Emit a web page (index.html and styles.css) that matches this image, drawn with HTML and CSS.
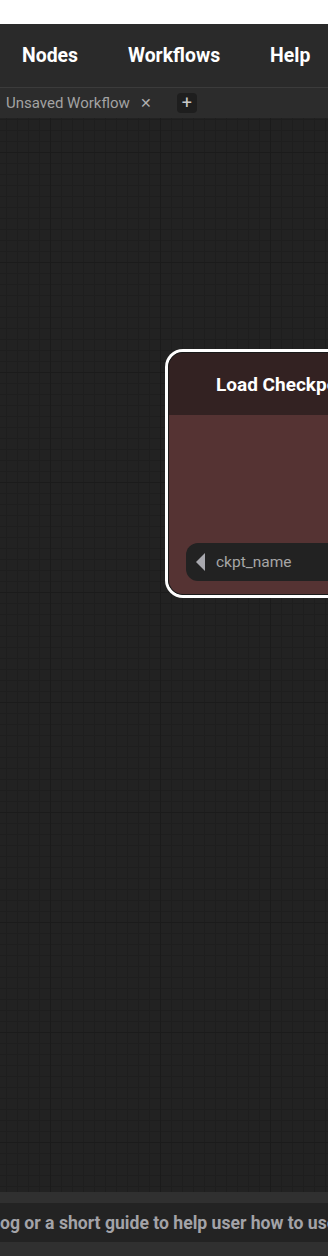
FILE: index.html
```html
<!DOCTYPE html>
<html lang="en">
<head>
    <meta charset="UTF-8">
    <meta name="viewport" content="width=device-width, initial-scale=1.0">
    <title>Workflow</title>
    <link rel="stylesheet" href="styles.css">
</head>
<body>
    <div class="app">
        <div class="topgap"></div>
        <nav class="menu">
            <span>Nodes</span>
            <span>Workflows</span>
            <span>Help</span>
        </nav>
        <div class="tabs">
            <span class="tab">Unsaved Workflow</span>
            <span class="tab-close">&#x2715;</span>
            <button type="button" class="tab-add">+</button>
        </div>
        <div class="canvas">
            <div class="node">
                <div class="node-title">Load Checkpoint</div>
                <div class="node-body">
                    <div class="widget">
                        <span class="arrow"></span>
                        <span class="widget-label">ckpt_name</span>
                    </div>
                </div>
            </div>
        </div>
        <div class="band"></div>
        <div class="guide">og or a short guide to help user how to use it</div>
        <div class="band"></div>
    </div>
</body>
</html>
```

FILE: styles.css
```css
*{
    box-sizing: border-box;
}

body{
    margin: 0;
    background-color: #fff;
    font-family: Roboto, "Noto Sans", sans-serif;
    overflow: hidden;
}

.app{
    width: 328px;
    height: 1256px;
    display: flex;
    flex-direction: column;
}

.topgap{
    height: 24px;
    background-color: #fff;
}

.menu{
    height: 64px;
    display: flex;
    align-items: center;
    gap: 50px;
    padding-left: 22px;
    background-color: #2a2a2a;
    border-bottom: 1px solid #3b3b3b;
    color: #fff;
    font-size: 19.4px;
    font-weight: bold;
    white-space: nowrap;
}

.tabs{
    height: 30px;
    display: flex;
    align-items: center;
    padding-left: 6px;
    background-color: #2c2c2c;
    color: #a3a3a3;
    font-size: 15px;
    white-space: nowrap;
}

.tab-close{
    margin-left: 10px;
    font-size: 14px;
    color: #b0b0b0;
}

.tab-add{
    margin-left: 25px;
    width: 20px;
    height: 20px;
    padding: 0;
    border: none;
    border-radius: 4px;
    background-color: #1e1e1e;
    color: #c8c8c8;
    font-family: Roboto, sans-serif;
    font-size: 18px;
    line-height: 20px;
}

.canvas{
    position: relative;
    flex: 1;
    overflow: hidden;
    background-color: #222;
    background-image:
        linear-gradient(to right, #1b1b1b 1px, transparent 1px),
        linear-gradient(to bottom, #1b1b1b 1px, transparent 1px),
        linear-gradient(to right, #1e1e1e 1px, transparent 1px),
        linear-gradient(to bottom, #1e1e1e 1px, transparent 1px);
    background-size: 110px 110px, 110px 110px, 11px 11px, 11px 11px;
    background-position: 50px 34px, 50px 34px, 6px 1px, 6px 1px;
}

.node{
    position: absolute;
    left: 168px;
    top: 234px;
    width: 300px;
    border: 1px solid #1a1a1a;
    border-radius: 15px;
    box-shadow: 0 0 0 3px #fff;
    overflow: hidden;
}

.node-title{
    height: 62px;
    padding-left: 47px;
    display: flex;
    align-items: center;
    background-color: #322;
    color: #fff;
    font-size: 19px;
    font-weight: bold;
    white-space: nowrap;
}

.node-body{
    height: 179px;
    padding: 128px 0 0 17px;
    background-color: #533;
}

.widget{
    height: 38px;
    display: flex;
    align-items: center;
    padding-left: 10px;
    border-radius: 12px;
    background-color: #222;
}

.arrow{
    width: 0;
    height: 0;
    border-top: 9px solid transparent;
    border-bottom: 9px solid transparent;
    border-right: 9px solid #a8a8ae;
}

.widget-label{
    margin-left: 11px;
    color: #a6a6a6;
    font-size: 15.5px;
}

.band{
    height: 11px;
    background-color: #303030;
}

.band:last-child{
    height: 14px;
}

.guide{
    height: 39px;
    display: flex;
    align-items: center;
    padding-left: 0;
    background-color: #232323;
    color: #a3a3a8;
    font-size: 17.6px;
    font-weight: bold;
    white-space: nowrap;
    overflow: hidden;
}
```
